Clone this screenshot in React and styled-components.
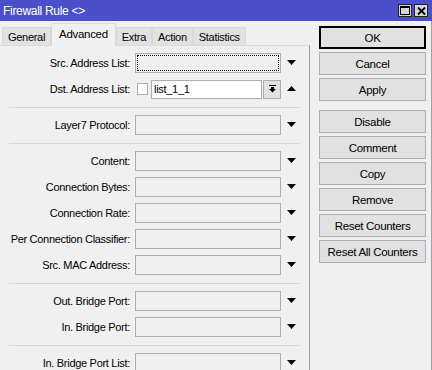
import React from "react";
import styled, { createGlobalStyle } from "styled-components";

const GlobalStyle = createGlobalStyle`
  html, body {
    margin: 0;
    padding: 0;
    background: #f0f0f0;
  }
  body {
    font-family: "Liberation Sans", Arial, sans-serif;
    font-size: 11px;
    letter-spacing: -0.3px;
    color: #000;
  }
`;

const groups = [
  [
    { label: "Src. Address List:", kind: "focus" },
    { label: "Dst. Address List:", kind: "list", value: "list_1_1" },
  ],
  [{ label: "Layer7 Protocol:" }],
  [
    { label: "Content:" },
    { label: "Connection Bytes:" },
    { label: "Connection Rate:" },
    { label: "Per Connection Classifier:" },
    { label: "Src. MAC Address:" },
  ],
  [{ label: "Out. Bridge Port:" }, { label: "In. Bridge Port:" }],
  [{ label: "In. Bridge Port List:" }],
];

const tabs = ["General", "Advanced", "Extra", "Action", "Statistics"];

const buttonGroups = [
  ["OK", "Cancel", "Apply"],
  ["Disable", "Comment", "Copy", "Remove", "Reset Counters", "Reset All Counters"],
];

const Arrow = ({ up }) => (
  <svg width="9" height="5" viewBox="0 0 9 5">
    <polygon points={up ? "0,5 9,5 4.5,0" : "0,0 9,0 4.5,5"} fill="#000" />
  </svg>
);

const App = () => {
  return (
    <React.Fragment>
      <GlobalStyle />
      <Window>
        <TitleBar>
          <Title>Firewall Rule &lt;&gt;</Title>
          <WinButtons>
            <WinButton>
              <svg width="10" height="9" viewBox="0 0 10 9">
                <rect x="0.5" y="0.5" width="9" height="8" fill="none" stroke="#000" />
                <rect x="0" y="0" width="10" height="2" fill="#000" />
              </svg>
            </WinButton>
            <WinButton>
              <svg width="9" height="8" viewBox="0 0 9 8">
                <path d="M1 0.5 L8 7.5 M8 0.5 L1 7.5" stroke="#000" strokeWidth="1.8" />
              </svg>
            </WinButton>
          </WinButtons>
        </TitleBar>

        <Body>
          <LeftPane>
            <Tabs>
              {tabs.map((t) => (
                <Tab key={t} $active={t === "Advanced"}>
                  {t}
                </Tab>
              ))}
            </Tabs>
            <Panel>
              {groups.map((rows, gi) => (
                <React.Fragment key={gi}>
                  {gi > 0 && <Separator />}
                  <Group>
                    {rows.map((r) => (
                      <Row key={r.label}>
                        <Label>{r.label}</Label>
                        {r.kind === "list" ? (
                          <ListField>
                            <CheckBox />
                            <TextInput>{r.value}</TextInput>
                            <SmallButton>
                              <svg width="7" height="8" viewBox="0 0 7 8">
                                <rect x="0" y="0" width="7" height="1" fill="#000" />
                                <rect x="2" y="2" width="3" height="2" fill="#000" />
                                <polygon points="0,4 7,4 3.5,7.5" fill="#000" />
                              </svg>
                            </SmallButton>
                          </ListField>
                        ) : (
                          <Field $focus={r.kind === "focus"} />
                        )}
                        <ArrowCell>
                          <Arrow up={r.kind === "list"} />
                        </ArrowCell>
                      </Row>
                    ))}
                  </Group>
                </React.Fragment>
              ))}
            </Panel>
          </LeftPane>

          <Buttons>
            {buttonGroups.map((g, i) => (
              <ButtonGroup key={i}>
                {g.map((b) => (
                  <Button key={b} $default={b === "OK"}>
                    {b}
                  </Button>
                ))}
              </ButtonGroup>
            ))}
          </Buttons>
        </Body>
      </Window>
    </React.Fragment>
  );
};

export default App;

const Window = styled.div`
  width: 432px;
  height: 370px;
  display: flex;
  flex-direction: column;
  overflow: hidden;
  background: #f0f0f0;
`;

const TitleBar = styled.div`
  height: 21px;
  flex-shrink: 0;
  background: #4b4fc9;
  display: flex;
  align-items: center;
  justify-content: space-between;
  padding: 0 4px 0 3px;
`;

const Title = styled.span`
  color: #fff;
  font-size: 12px;
`;

const WinButtons = styled.div`
  display: flex;
  gap: 2px;
`;

const WinButton = styled.div`
  width: 14px;
  height: 13px;
  box-sizing: border-box;
  border: 1px solid #222;
  background: #d6d6d6;
  display: flex;
  align-items: center;
  justify-content: center;
`;

const Body = styled.div`
  flex: 1;
  display: flex;
  border-right: 1px solid #a0a0a0;
`;

const LeftPane = styled.div`
  width: 310px;
  display: flex;
  flex-direction: column;
`;

const Tabs = styled.div`
  height: 24px;
  display: flex;
  align-items: flex-end;
  padding-left: 2px;
`;

const Tab = styled.div`
  position: relative;
  box-sizing: border-box;
  height: ${(p) => (p.$active ? "23px" : "18px")};
  margin-bottom: ${(p) => (p.$active ? "-1px" : "0")};
  padding: ${(p) => (p.$active ? "0 7px 3px" : "0 5px")};
  border: 1px solid #d9d9d9;
  border-bottom: none;
  background: ${(p) => (p.$active ? "#f0f0f0" : "#e1e1e1")};
  display: flex;
  align-items: center;
  font-size: ${(p) => (p.$active ? "11.5px" : "11px")};
`;

const Panel = styled.div`
  flex: 1;
  border-top: 1px solid #d9d9d9;
  border-right: 1px solid #a0a0a0;
  padding-top: 7px;
`;

const Group = styled.div`
  display: flex;
  flex-direction: column;
  gap: 6px;
`;

const Separator = styled.div`
  height: 1px;
  background: #d9d9d9;
  margin: 8px 9px 7px 9px;
`;

const Row = styled.div`
  height: 20px;
  display: grid;
  grid-template-columns: 130px 146px 11px;
  column-gap: 5px;
  align-items: center;
`;

const Label = styled.span`
  text-align: right;
  white-space: nowrap;
`;

const Field = styled.div`
  height: 20px;
  box-sizing: border-box;
  border: 1px solid #adadad;
  background: #f0f0f0;
  outline: ${(p) => (p.$focus ? "1px dotted #000" : "none")};
  outline-offset: -3px;
`;

const ListField = styled.div`
  height: 20px;
  display: flex;
  align-items: center;
`;

const CheckBox = styled.div`
  width: 11px;
  height: 12px;
  box-sizing: border-box;
  border: 1px solid #adadad;
  background: #fff;
  margin: 0 3px 0 2px;
  flex-shrink: 0;
`;

const TextInput = styled.div`
  flex: 1;
  height: 19px;
  box-sizing: border-box;
  border: 1px solid #adadad;
  background: #fff;
  padding-left: 2px;
  display: flex;
  align-items: center;
`;

const SmallButton = styled.div`
  width: 18px;
  height: 19px;
  box-sizing: border-box;
  margin-left: 1px;
  border: 1px solid #adadad;
  background: #e1e1e1;
  display: flex;
  align-items: center;
  justify-content: center;
  flex-shrink: 0;
`;

const ArrowCell = styled.div`
  display: flex;
  justify-content: center;
  align-items: center;
  padding-bottom: 2px;
`;

const Buttons = styled.div`
  width: 107px;
  margin-left: 9px;
  padding-top: 5px;
  display: flex;
  flex-direction: column;
  gap: 9px;
`;

const ButtonGroup = styled.div`
  display: flex;
  flex-direction: column;
  gap: 3px;
`;

const Button = styled.div`
  height: 23px;
  box-sizing: border-box;
  border: 1px solid ${(p) => (p.$default ? "#000" : "#adadad")};
  box-shadow: ${(p) => (p.$default ? "inset 0 0 0 1px #000" : "none")};
  background: #e1e1e1;
  display: flex;
  align-items: center;
  justify-content: center;
  white-space: nowrap;
  font-size: 11.5px;
`;
